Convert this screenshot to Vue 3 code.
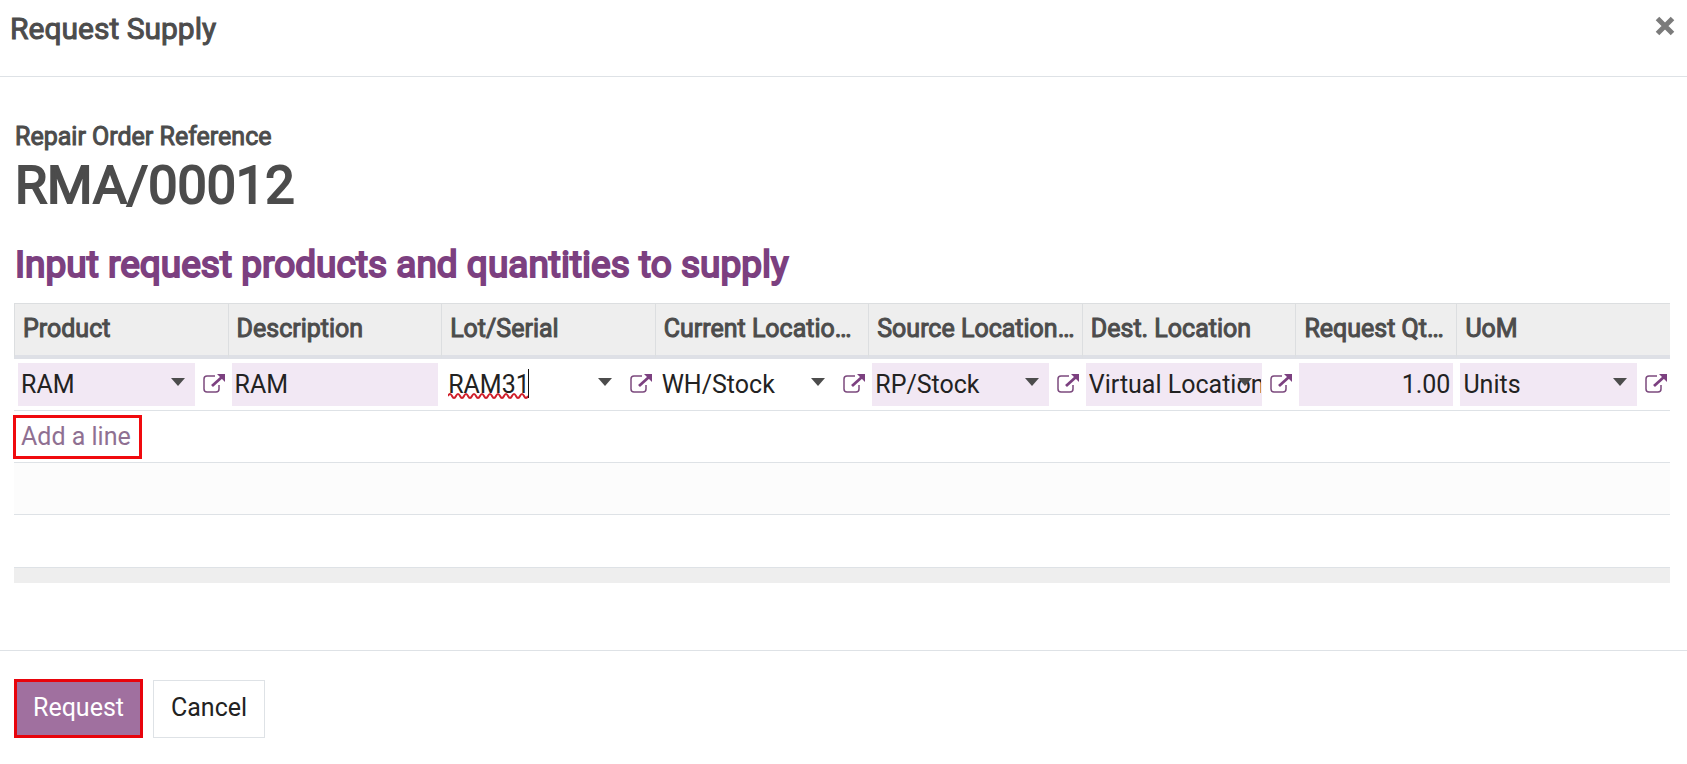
<template>
  <div class="modal-content">
    <header class="modal-header">
      <h4 class="modal-title">Request Supply</h4>
      <button type="button" class="close" aria-label="Close">
        <svg viewBox="0 0 20 20" width="20" height="20">
          <path d="M2.5 2.5L17.5 17.5M17.5 2.5L2.5 17.5" stroke="#7b7b7b" stroke-width="5" fill="none" />
        </svg>
      </button>
    </header>

    <main class="modal-body">
      <div class="reference-label">Repair Order Reference</div>
      <h1 class="reference">RMA/00012</h1>
      <h2 class="section-title">Input request products and quantities to supply</h2>

      <table class="lines">
        <thead>
          <tr>
            <th v-for="col in columns" :key="col.key" :class="{ number: col.type === 'number' }">
              {{ col.label }}
            </th>
          </tr>
        </thead>
        <tbody>
          <tr>
            <td v-for="col in columns" :key="col.key">
              <div class="field">
                <div class="control">
                  <select
                    v-if="col.type === 'select'"
                    v-model="line[col.key]"
                    class="input"
                    :class="{ required: col.required }"
                    :aria-label="col.label"
                  >
                    <option>{{ line[col.key] }}</option>
                  </select>
                  <input
                    v-else
                    v-model="line[col.key]"
                    type="text"
                    class="input"
                    :class="{ required: col.required, 'text-right': col.type === 'number' }"
                    :aria-label="col.label"
                  />
                  <svg v-if="col.key === 'lot'" class="typing" viewBox="0 0 82 30" width="82" height="30">
                    <path :d="squiggle" stroke="#d0202c" stroke-width="2" fill="none" />
                    <path d="M80.5 0V29" stroke="#111" stroke-width="1" />
                  </svg>
                  <svg v-if="col.link" class="caret" viewBox="0 0 14 8" width="14" height="8">
                    <path d="M0 0H14L7 8Z" fill="#4c4c4c" />
                  </svg>
                </div>
                <button v-if="col.link" type="button" class="external" :aria-label="'Open ' + col.label">
                  <svg viewBox="0 0 22 20" width="22" height="20">
                    <path d="M12 2H4Q1 2 1 5V15Q1 18 4 18H13Q16 18 16 15V11" stroke="#7c4a7e" stroke-width="1.5" fill="none" />
                    <path d="M9 12L19 3" stroke="#7c4080" stroke-width="2.8" />
                    <path d="M14 0H22V8Z" fill="#7c4080" />
                  </svg>
                </button>
              </div>
            </td>
          </tr>
          <tr>
            <td :colspan="columns.length">
              <a href="#" class="add-line" @click.prevent>Add a line</a>
            </td>
          </tr>
          <tr class="striped">
            <td :colspan="columns.length"></td>
          </tr>
          <tr>
            <td :colspan="columns.length"></td>
          </tr>
        </tbody>
        <tfoot>
          <tr>
            <td :colspan="columns.length"></td>
          </tr>
        </tfoot>
      </table>
    </main>

    <footer class="modal-footer">
      <button type="button" class="btn btn-primary">Request</button>
      <button type="button" class="btn btn-secondary">Cancel</button>
    </footer>
  </div>
</template>

<script setup>
import { reactive } from "vue";

const columns = [
  { key: "product", label: "Product", type: "select", required: true, link: true },
  { key: "description", label: "Description", type: "text", required: true },
  { key: "lot", label: "Lot/Serial", type: "text", link: true },
  { key: "current", label: "Current Locatio…", type: "select", link: true },
  { key: "source", label: "Source Location…", type: "select", required: true, link: true },
  { key: "dest", label: "Dest. Location", type: "select", required: true, link: true },
  { key: "qty", label: "Request Qt…", type: "number", required: true },
  { key: "uom", label: "UoM", type: "select", required: true, link: true },
];

const line = reactive({
  product: "RAM",
  description: "RAM",
  lot: "RAM31",
  current: "WH/Stock",
  source: "RP/Stock",
  dest: "Virtual Location",
  qty: "1.00",
  uom: "Units",
});

// spell check underline below the typed lot
const squiggle = "M0 27" + "q2 -4 4 0t4 0".repeat(10);
</script>

<style>
body {
  margin: 0;
  background: #fff;
}
</style>

<style scoped>
.modal-content {
  font-family: Roboto, sans-serif;
  font-size: 25px;
  line-height: 36px;
  color: #4c4c4c;
}

.modal-content * {
  box-sizing: border-box;
}

button,
input,
select {
  font: inherit;
  margin: 0;
}

h1,
h2,
h4 {
  margin: 0;
}

.modal-title,
.reference-label,
.reference,
.section-title,
th {
  font-weight: 400;
  -webkit-text-stroke: 1px currentColor;
}

.modal-header {
  display: flex;
  justify-content: space-between;
  align-items: flex-start;
  padding: 7px 10px 25px;
  border-bottom: 1px solid #dee2e6;
}

.modal-title {
  font-size: 30px;
  line-height: 44px;
}

.close {
  display: flex;
  padding: 9px 2px;
  border: 0;
  background: none;
}

.modal-body {
  padding: 42px 17px 67px 14px;
}

.reference-label {
  padding-left: 1px;
}

.reference {
  padding-left: 1px;
  font-size: 52px;
  line-height: 62px;
  -webkit-text-stroke-width: 2px;
}

.section-title {
  padding: 22px 1px 12px;
  font-size: 37px;
  line-height: 52px;
  color: #7c4080;
  -webkit-text-stroke-width: 2px;
}

.lines {
  width: 100%;
  table-layout: fixed;
  border-collapse: separate;
  border-spacing: 0;
}

th {
  height: 56px;
  padding: 0 8px 2px;
  border-top: 1px solid #dcdee0;
  border-left: 1px solid #dcdee0;
  border-bottom: 4px solid #dee0e6;
  background: #eee;
  text-align: left;
  white-space: nowrap;
}

th.number {
  width: 161px;
}

tbody td {
  height: 52px;
  padding: 0 3px 0 4px;
  border-bottom: 1px solid #dee2e6;
}

tbody tr:last-child td {
  height: 53px;
}

.field {
  display: flex;
  align-items: center;
  gap: 8px;
}

.control {
  position: relative;
  flex: 1;
  min-width: 0;
}

.input {
  display: block;
  width: 100%;
  height: 43px;
  padding: 0 3px;
  border: 0;
  border-radius: 0;
  outline: 0;
  background: #fff;
  color: #222;
  appearance: none;
}

select.input {
  padding-right: 1px;
}

.input.required {
  background: #f2e8f4;
}

.text-right {
  text-align: right;
}

.caret {
  position: absolute;
  top: 15px;
  right: 10px;
  pointer-events: none;
}

.typing {
  position: absolute;
  top: 6px;
  left: 3px;
  pointer-events: none;
}

.external {
  display: flex;
  padding: 0 0 2px;
  border: 0;
  background: none;
}

.add-line {
  display: inline-block;
  margin-left: -5px;
  padding: 1px 8px 1px 5px;
  border: 3px solid #f00a0e;
  color: #8f7092;
  text-decoration: none;
}

.striped td {
  background: #fcfcfc;
}

tfoot td {
  height: 15px;
  padding: 0;
  background: #eee;
}

.modal-footer {
  display: flex;
  align-items: flex-end;
  gap: 10px;
  padding: 28px 14px;
  border-top: 1px solid #dee2e6;
}

.btn {
  height: 58px;
  padding: 0 17px 2px;
  border: 1px solid #dee2e6;
  border-radius: 0;
  background: #fff;
  color: #222;
}

.btn-primary {
  height: 59px;
  padding: 0 16px 2px;
  border: 3px solid #e8040c;
  background: #a0709f;
  color: #fff;
}
</style>
